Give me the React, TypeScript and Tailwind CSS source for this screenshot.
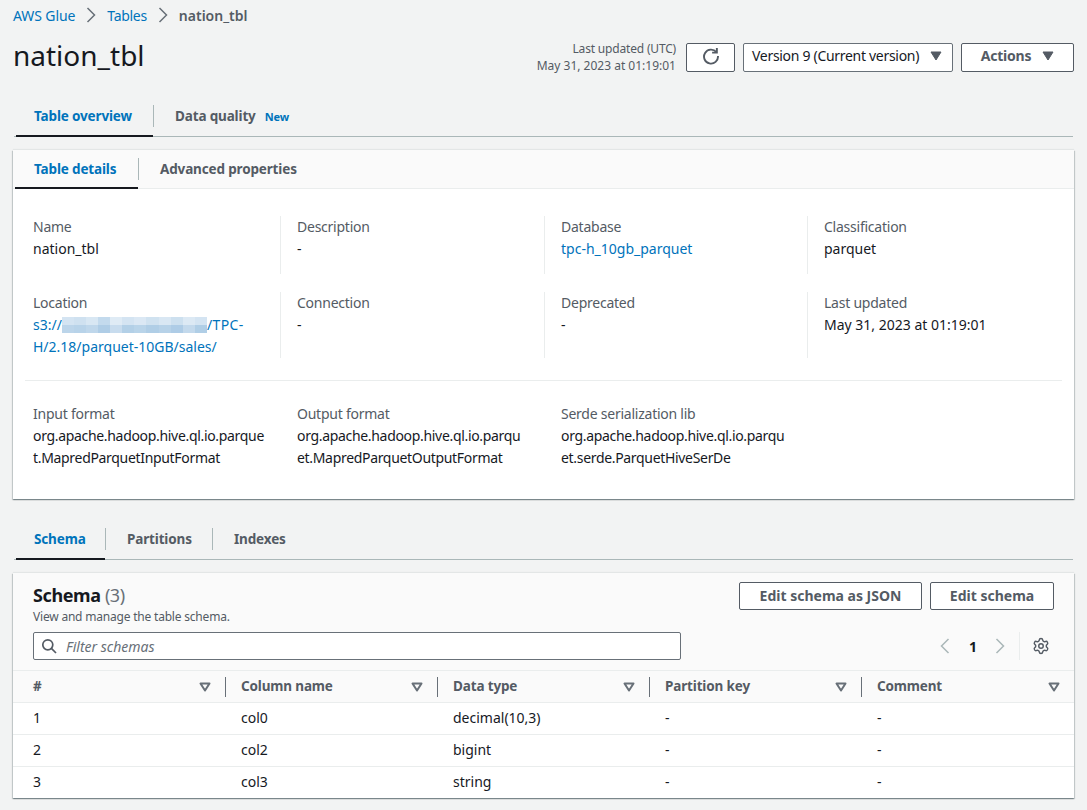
import React from "react";
import { Settings } from "lucide-react";

const font = { fontFamily: '"Noto Sans", sans-serif' };

function Caret({ className = "" }: { className?: string }) {
  return (
    <svg width="12" height="10" viewBox="0 0 12 10" className={className}>
      <path d="M1 1h10L6 9z" fill="#545b64" stroke="#545b64" strokeWidth="1" strokeLinejoin="round" />
    </svg>
  );
}
function SortCaret() {
  return (
    <svg width="12" height="10" viewBox="0 0 12 10" className="shrink-0">
      <path d="M1.5 1.5h9L6 8.5z" fill="none" stroke="#687078" strokeWidth="2" strokeLinejoin="round" />
    </svg>
  );
}
function Chevron({ color = "#687078", left = false }: { color?: string; left?: boolean }) {
  return (
    <svg width="16" height="16" viewBox="0 0 16 16" fill="none">
      <path d={left ? "M11.5 1L4.5 8l7 7" : "M4.5 1l7 7-7 7"} stroke={color} strokeWidth="1.5" />
    </svg>
  );
}
function Field({ label, children, className = "pr-4", valueClass = "" }: { label: string; children: React.ReactNode; className?: string; valueClass?: string }) {
  return (
    <div className={className}>
      <div className="text-[14px] leading-[22px] tracking-[-0.24px] text-[#545b64]">{label}</div>
      <div className={`text-[14px] leading-[22px] text-[#16191f] break-all ${valueClass}`}>{children}</div>
    </div>
  );
}
const blurTop = ["#d4e4f2","#cfe1f0","#d8e7f3","#c3daed","#dfebf5","#d4e4f2","#dbe8f4","#d0e2f0","#d9e7f3","#cde0ef","#dce9f4","#d4e4f2"];
const blurBot = ["#bcd5ea","#b8d3e9","#bfd7eb","#afcde6","#c8dcee","#b3d0e7","#b9d4e9","#b0cee6","#b7d2e8","#aecce6","#c3d9ec","#b0cee6"];

function Tab({ label, active, sep, extra, w, pl, sepTop, labelH = "h-[35px]" }: { label: string; active?: boolean; sep?: boolean; extra?: React.ReactNode; w: string; pl: string; sepTop: string; labelH?: string }) {
  return (
    <div className={`relative h-full ${w} ${pl}`}>
      <div className={`flex items-center ${labelH}`}>
        <span className={`text-[13.5px] tracking-[-0.15px] font-bold ${active ? "text-[#0073bb]" : "text-[#545b64]"}`}>{label}</span>
        {extra}
      </div>
      {sep && <span className={`absolute right-0 h-[22px] w-px bg-[#aab7b8] ${sepTop}`} />}
      {active && <span className="absolute left-[2px] right-[1px] -bottom-[1px] h-[2px] bg-[#16191f]" />}
    </div>
  );
}
function Head({ label, w, divider = true, pl }: { label: string; w: string; divider?: boolean; pl: string }) {
  return (
    <div className={`flex items-center justify-between h-full ${w} ${pl} pr-[14px]`}>
      <span className="text-[13.5px] tracking-[-0.15px] font-bold text-[#545b64]">{label}</span>
      <div className="flex items-center h-full">
        <SortCaret />
        {divider && <span className="ml-[14px] -mr-[14px] h-5 w-px bg-[#687078]" />}
      </div>
    </div>
  );
}
function Row({ cells, last }: { cells: string[]; last?: boolean }) {
  return (
    <div className={`flex items-center h-[32px] pb-[2px] text-[14px] text-[#16191f] border-b ${last ? "border-transparent" : "border-[#eaeded]"}`}>
      <div className="w-[213px] pl-[20px]">{cells[0]}</div>
      <div className="w-[212px] pl-[15px]">{cells[1]}</div>
      <div className="w-[212px] pl-[15px]">{cells[2]}</div>
      <div className="w-[212px] pl-[15px]">{cells[3]}</div>
      <div className="w-[212px] pl-[15px]">{cells[4]}</div>
    </div>
  );
}
const btn = "flex items-center justify-center bg-white rounded-[2px] border border-[#545b64] text-[14px] font-bold text-[#545b64]";
const cardShadow = "bg-white shadow-[0_1px_1px_0_rgba(0,28,36,0.3),1px_1px_1px_0_rgba(0,28,36,0.15),-1px_1px_1px_0_rgba(0,28,36,0.15),0_-1px_1px_0_rgba(0,28,36,0.06)]";

export default function App() {
  return (
    <div style={font} className="w-[1087px] h-[810px] overflow-hidden bg-[#f2f3f3] px-[13px]">
      <div className="flex items-center h-[30px] text-[14px]">
        <span className="text-[#0073bb] tracking-[-0.1px]">AWS Glue</span>
        <span className="mx-[8px]"><Chevron /></span>
        <span className="text-[#0073bb] tracking-[-0.3px]">Tables</span>
        <span className="mx-[8px]"><Chevron /></span>
        <span className="font-semibold text-[#545b64]">nation_tbl</span>
      </div>

      <div className="flex items-start justify-between h-[57px]">
        <h1 className="text-[28px] leading-[50px] text-[#16191f] font-normal">nation_tbl</h1>
        <div className="flex items-center mt-[10px]">
          <div className="text-right text-[12px] leading-[17px] text-[#545b64] mr-[10px]">
            <div className="tracking-[-0.18px]">Last updated (UTC)</div>
            <div>May 31, 2023 at 01:19:01</div>
          </div>
          <div className={`${btn} w-[49px] h-[29px] pb-[2px]`}>
            <svg width="18" height="18" viewBox="0 0 16 16" fill="none" stroke="#545b64" strokeWidth="1.7">
              <path d="M12.8 4.6A6.2 6.2 0 1 0 14.2 8" />
              <path d="M13.2 0.8v4.2H9" />
            </svg>
          </div>
          <div className="flex items-center justify-between h-[29px] w-[210px] ml-2 pl-2 pr-[10px] pb-[2px] bg-white rounded-[2px] border border-[#687078] text-[14px] tracking-[-0.3px] text-[#16191f]">
            <span className="-mt-[2px]">Version 9 (Current version)</span>
            <Caret />
          </div>
          <div className={`${btn} w-[113px] h-[29px] ml-2 pb-[2px] gap-[11px] tracking-[-0.2px]`}>
            <span className="-mt-[2px]">Actions</span>
            <Caret />
          </div>
        </div>
      </div>

      <div className="flex h-[38px] mt-[12px] border-b border-[#aab7b8] mx-[1px]">
        <Tab label="Table overview" active sep w="w-[140px]" pl="pl-[20px]" sepTop="top-[6px]" />
        <Tab
          label="Data quality"
          w="w-[180px]"
          pl="pl-[21px]"
          sepTop="top-[6px]"
          extra={<span className="ml-[9px] mt-[2px] text-[11px] tracking-[-0.1px] font-bold text-[#0073bb]">New</span>}
        />
      </div>

      <div className={`mt-[13px] h-[349px] ${cardShadow}`}>
        <div className="flex h-[39px] border-b border-[#eaeded] bg-[#fafafa]">
          <Tab label="Table details" active sep w="w-[126px]" pl="pl-[21px]" sepTop="top-[8px]" labelH="h-[38px]" />
          <Tab label="Advanced properties" w="w-[180px]" pl="pl-[21px]" sepTop="top-[8px]" labelH="h-[38px]" />
        </div>

        <div className="pt-[27px] pl-[20px]">
          <div className="grid grid-cols-[247px_264px_263px_260px] h-[58px]">
            <Field label="Name">nation_tbl</Field>
            <Field label="Description" className="border-l border-[#eaeded] pl-4">-</Field>
            <Field label="Database" className="border-l border-[#eaeded] pl-4"><span className="text-[#0073bb]">tpc-h_10gb_parquet</span></Field>
            <Field label="Classification" className="border-l border-[#eaeded] pl-4">parquet</Field>
          </div>
          <div className="grid grid-cols-[247px_264px_263px_260px] mt-[18px] h-[66px]">
            <div className="pr-4">
              <div className="text-[14px] leading-[22px] tracking-[-0.24px] text-[#545b64]">Location</div>
              <div className="text-[14px] leading-[22px] text-[#0073bb]">
                s3://
                <span className="inline-flex flex-col align-middle w-[145px] h-[16px] -mt-[2px]">
                  <span className="flex flex-1">{blurTop.map((c, i) => <span key={i} className="flex-1" style={{ background: c }} />)}</span>
                  <span className="flex flex-1">{blurBot.map((c, i) => <span key={i} className="flex-1" style={{ background: c }} />)}</span>
                </span>
                <span className="tracking-[0.4px]">/TPC-</span>H/2.18/parquet-10GB/sales/
              </div>
            </div>
            <Field label="Connection" className="border-l border-[#eaeded] pl-4">-</Field>
            <Field label="Deprecated" className="border-l border-[#eaeded] pl-4">-</Field>
            <Field label="Last updated" className="border-l border-[#eaeded] pl-4">May 31, 2023 at 01:19:01</Field>
          </div>
          <div className="-ml-2 mr-3 mt-[22px] h-px bg-[#eaeded]" />
          <div className="grid grid-cols-[247px_264px_263px] pt-[22px]">
            <Field label="Input format" className="pr-[14px]" valueClass="tracking-[-0.32px]">org.apache.hadoop.hive.ql.io.parquet.MapredParquetInputFormat</Field>
            <Field label="Output format" className="pl-[17px] pr-[21px]" valueClass="tracking-[-0.32px]">org.apache.hadoop.hive.ql.io.parquet.MapredParquetOutputFormat</Field>
            <Field label="Serde serialization lib" className="pl-[17px] pr-[20px]" valueClass="tracking-[-0.32px]">org.apache.hadoop.hive.ql.io.parquet.serde.ParquetHiveSerDe</Field>
          </div>
        </div>
      </div>

      <div className="flex h-[38px] mt-[23px] border-b border-[#aab7b8] mx-[1px]">
        <Tab label="Schema" active sep w="w-[92px]" pl="pl-[20px]" sepTop="top-[6px]" />
        <Tab label="Partitions" sep w="w-[107px]" pl="pl-[21px]" sepTop="top-[6px]" />
        <Tab label="Indexes" w="w-[100px]" pl="pl-[21px]" sepTop="top-[6px]" />
      </div>

      <div className={`mt-[13px] h-[225px] ${cardShadow}`}>
        <div className="bg-[#fafafa] h-[98px] border-b border-[#eaeded] pl-5 pr-5">
          <div className="flex justify-between h-[59px]">
            <div className="pt-[10px]">
              <div className="text-[18px] leading-[24px] tracking-[-0.4px] font-bold text-[#16191f]">
                Schema <span className="font-normal text-[#687078]">(3)</span>
              </div>
              <div className="mt-[2px] text-[12px] leading-[16px] tracking-[-0.2px] text-[#545b64]">View and manage the table schema.</div>
            </div>
            <div className="flex gap-[8px] pt-[9px]">
              <div className={`${btn} w-[183px] h-[28px] pb-[2px]`}>Edit schema as JSON</div>
              <div className={`${btn} w-[124px] h-[28px] pb-[2px]`}>Edit schema</div>
            </div>
          </div>
          <div className="flex items-center justify-between">
            <div className="flex items-center w-[648px] h-[28px] bg-white border border-[#687078] rounded-[2px] pl-[7px]">
              <svg width="16" height="16" viewBox="0 0 16 16" fill="none" stroke="#545b64" strokeWidth="1.7">
                <circle cx="6.8" cy="6.8" r="5" />
                <path d="M10.4 10.4L15 15" />
              </svg>
              <span className="ml-[9px] text-[14px] italic text-[#687078]">Filter schemas</span>
            </div>
            <div className="flex items-center h-[28px]">
              <Chevron left color="#aab7b8" />
              <span className="ml-4 mr-[15px] text-[14px] font-bold text-[#16191f]">1</span>
              <Chevron color="#aab7b8" />
              <span className="ml-[11px] h-7 w-px bg-[#eaeded]" />
              <Settings className="ml-[12px] mr-[4px]" size={18} color="#545b64" strokeWidth={1.9} />
            </div>
          </div>
        </div>
        <div className="flex items-center h-[32px] bg-[#fafafa] border-b border-[#eaeded]">
          <Head label="#" w="w-[213px]" pl="pl-[20px]" />
          <Head label="Column name" w="w-[212px]" pl="pl-[15px]" />
          <Head label="Data type" w="w-[212px]" pl="pl-[15px]" />
          <Head label="Partition key" w="w-[212px]" pl="pl-[15px]" />
          <Head label="Comment" w="w-[212px]" pl="pl-[15px]" divider={false} />
        </div>
        <Row cells={["1", "col0", "decimal(10,3)", "-", "-"]} />
        <Row cells={["2", "col2", "bigint", "-", "-"]} />
        <Row cells={["3", "col3", "string", "-", "-"]} last />
      </div>
    </div>
  );
}
